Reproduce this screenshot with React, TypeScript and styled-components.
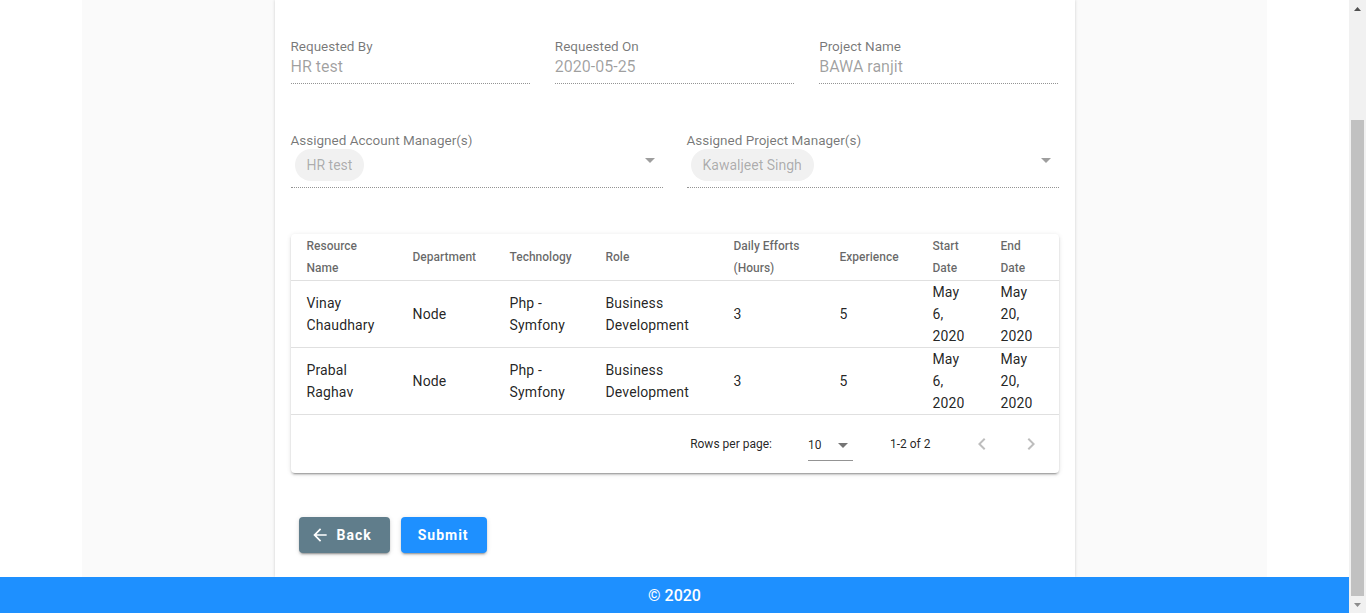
import React from 'react'
import styled, { createGlobalStyle } from 'styled-components'

const GlobalStyle = createGlobalStyle`
  html, body {
    margin: 0;
    padding: 0;
    background: #fff;
    overflow: hidden;
    font-family: Roboto, 'Liberation Sans', Arial, sans-serif;
  }
  * { box-sizing: border-box; }
`

const Viewport = styled.div`
  height: 100vh;
  display: flex;
`

const Page = styled.div`
  flex: 1;
  min-width: 0;
  display: flex;
  flex-direction: column;
`

const Shell = styled.main`
  flex: 1;
  width: 1185px;
  margin: 0 auto;
  background: #fafafa;
  display: flex;
  justify-content: center;
`

const Card = styled.section`
  width: 800px;
  background: #fff;
  box-shadow: 0 0 3px rgba(0, 0, 0, 0.18);
  padding: 40px 16px 24px;
  display: flex;
  flex-direction: column;
  justify-content: flex-end;
`

const FieldGrid = styled.div<{ $cols: number; $gap: number }>`
  display: grid;
  grid-template-columns: repeat(${(p) => p.$cols}, 1fr);
  column-gap: ${(p) => p.$gap}px;
  margin-bottom: ${(p) => (p.$cols === 3 ? 50 : 46)}px;
`

const Field = styled.div`
  display: flex;
  flex-direction: column;
`

const Label = styled.label`
  font-size: 13.5px;
  line-height: 12px;
  height: 12px;
  color: rgba(0, 0, 0, 0.54);
  white-space: nowrap;
`

const InputLine = styled.div`
  border-bottom: 1px dotted rgba(0, 0, 0, 0.42);
  padding: 5px 0 7px;
  font-size: 16px;
  line-height: 19px;
  color: rgba(0, 0, 0, 0.38);
`

const SelectLine = styled.div`
  border-bottom: 1px dotted rgba(0, 0, 0, 0.42);
  padding: 3px 1px 6px 4px;
  display: flex;
  align-items: flex-start;
  justify-content: space-between;
`

const Chip = styled.span`
  height: 32px;
  border-radius: 16px;
  background: #f1f1f1;
  color: rgba(0, 0, 0, 0.3);
  font-size: 14px;
  display: inline-flex;
  align-items: center;
  padding: 0 12px;
`

const DropIcon = styled.svg`
  width: 24px;
  height: 24px;
  fill: rgba(0, 0, 0, 0.38);
  margin-top: -1px;
`

const Paper = styled.div`
  border-radius: 4px;
  background: #fff;
  box-shadow: 0px 3px 1px -2px rgba(0, 0, 0, 0.2), 0px 2px 2px 0px rgba(0, 0, 0, 0.14),
    0px 1px 5px 0px rgba(0, 0, 0, 0.12);
  margin-bottom: 44px;
`

const Table = styled.table`
  width: 100%;
  table-layout: fixed;
  border-collapse: collapse;
`

const Col = styled.col<{ $w: number }>`
  width: ${(p) => p.$w}px;
`

const HeadCell = styled.th`
  text-align: left;
  vertical-align: middle;
  font-size: 12px;
  font-weight: 500;
  line-height: 22px;
  color: rgba(0, 0, 0, 0.6);
  padding: 1px 16px;
  border-bottom: 1px solid #e0e0e0;
`

const Cell = styled.td`
  font-size: 14px;
  line-height: 22px;
  color: rgba(0, 0, 0, 0.87);
  letter-spacing: 0.01em;
  padding: 0 16px;
  vertical-align: middle;
  border-bottom: 1px solid #e0e0e0;
`

const Pager = styled.div`
  height: 58px;
  display: flex;
  align-items: center;
  justify-content: flex-end;
  padding-right: 3px;
  font-size: 12px;
  color: rgba(0, 0, 0, 0.87);
`

const PagerSelect = styled.div`
  margin: 0 37px 0 36px;
  width: 45px;
  height: 34px;
  display: flex;
  align-items: center;
  justify-content: space-between;
  border-bottom: 1px solid rgba(0, 0, 0, 0.42);
  padding-top: 2px;
  svg {
    width: 24px;
    height: 24px;
    fill: rgba(0, 0, 0, 0.54);
    margin-right: -2px;
  }
`

const PagerActions = styled.div`
  display: flex;
  margin-left: 27px;
`

const IconBtn = styled.button`
  width: 49px;
  height: 48px;
  border: 0;
  background: transparent;
  display: flex;
  align-items: center;
  justify-content: center;
  padding: 0;
  svg {
    width: 24px;
    height: 24px;
    fill: rgba(0, 0, 0, 0.26);
  }
`

const Actions = styled.div`
  display: flex;
  gap: 11px;
  padding-left: 8px;
`

const Button = styled.button<{ $tone: 'grey' | 'blue' }>`
  height: 36px;
  border: 0;
  border-radius: 4px;
  padding: ${(p) => (p.$tone === 'grey' ? '0 18px 0 11px' : '0 18px 0 17px')};
  display: inline-flex;
  align-items: center;
  gap: 7px;
  background: ${(p) => (p.$tone === 'grey' ? '#607d8b' : '#1e90ff')};
  color: #fff;
  font-family: Roboto, 'Liberation Sans', Arial, sans-serif;
  font-size: 14px;
  font-weight: 700;
  letter-spacing: 1px;
  box-shadow: 0px 3px 1px -2px rgba(0, 0, 0, 0.2), 0px 2px 2px 0px rgba(0, 0, 0, 0.14),
    0px 1px 5px 0px rgba(0, 0, 0, 0.12);
  svg {
    width: 20px;
    height: 20px;
    fill: #fff;
  }
`

const Footer = styled.footer`
  height: 36px;
  flex-shrink: 0;
  background: #1e90ff;
  color: #fff;
  font-size: 16px;
  font-weight: 500;
  display: flex;
  align-items: center;
  justify-content: center;
`

/* the window's own scrollbar, scrolled to the bottom */
const ScrollBar = styled.aside`
  width: 17px;
  flex-shrink: 0;
  background: #f1f1f1;
  display: flex;
  flex-direction: column;
`

const ScrollArrow = styled.div<{ $up?: boolean }>`
  height: 17px;
  display: flex;
  align-items: center;
  justify-content: center;
  svg {
    width: 7px;
    height: 4px;
    fill: ${(p) => (p.$up ? '#505050' : '#8c8c8c')};
  }
`

const ScrollTrack = styled.div`
  flex: 1;
  display: flex;
  flex-direction: column;
  justify-content: flex-end;
  padding: 0 2px;
`

const ScrollThumb = styled.div`
  height: 82.2%;
  background: #c1c1c1;
`

const rows = [
  { name: 'Vinay Chaudhary', start: 'May 6, 2020' },
  { name: 'Prabal Raghav', start: 'May 6, 2020' },
]

const widths = [106, 97, 96, 128, 106, 93, 68, 74]

const ArrowDrop = () => (
  <svg viewBox="0 0 24 24">
    <path d="M7 10l5 5 5-5z" />
  </svg>
)

export default function App() {
  return (
    <>
      <GlobalStyle />
      <Viewport>
        <Page>
          <Shell>
            <Card>
              <FieldGrid $cols={3} $gap={25}>
                <Field>
                  <Label>Requested By</Label>
                  <InputLine>HR test</InputLine>
                </Field>
                <Field>
                  <Label>Requested On</Label>
                  <InputLine>2020-05-25</InputLine>
                </Field>
                <Field>
                  <Label>Project Name</Label>
                  <InputLine>BAWA ranjit</InputLine>
                </Field>
              </FieldGrid>
              <FieldGrid $cols={2} $gap={24}>
                <Field>
                  <Label>Assigned Account Manager(s)</Label>
                  <SelectLine>
                    <Chip>HR test</Chip>
                    <DropIcon viewBox="0 0 24 24">
                      <path d="M7 10l5 5 5-5z" />
                    </DropIcon>
                  </SelectLine>
                </Field>
                <Field>
                  <Label>Assigned Project Manager(s)</Label>
                  <SelectLine>
                    <Chip>Kawaljeet Singh</Chip>
                    <DropIcon viewBox="0 0 24 24">
                      <path d="M7 10l5 5 5-5z" />
                    </DropIcon>
                  </SelectLine>
                </Field>
              </FieldGrid>

              <Paper>
                <Table>
                  <colgroup>
                    {widths.map((w, i) => (
                      <Col key={i} $w={w} />
                    ))}
                  </colgroup>
                  <thead>
                    <tr>
                      <HeadCell>Resource Name</HeadCell>
                      <HeadCell>Department</HeadCell>
                      <HeadCell>Technology</HeadCell>
                      <HeadCell>Role</HeadCell>
                      <HeadCell>Daily Efforts (Hours)</HeadCell>
                      <HeadCell>Experience</HeadCell>
                      <HeadCell>Start Date</HeadCell>
                      <HeadCell>End Date</HeadCell>
                    </tr>
                  </thead>
                  <tbody>
                    {rows.map((r) => (
                      <tr key={r.name}>
                        <Cell>{r.name}</Cell>
                        <Cell>Node</Cell>
                        <Cell>Php - Symfony</Cell>
                        <Cell>Business Development</Cell>
                        <Cell>3</Cell>
                        <Cell>5</Cell>
                        <Cell>{r.start}</Cell>
                        <Cell>May 20, 2020</Cell>
                      </tr>
                    ))}
                  </tbody>
                </Table>
                <Pager>
                  <span>Rows per page:</span>
                  <PagerSelect>
                    <span>10</span>
                    <ArrowDrop />
                  </PagerSelect>
                  <span>1-2 of 2</span>
                  <PagerActions>
                    <IconBtn aria-label="previous page">
                      <svg viewBox="0 0 24 24">
                        <path d="M15.41 16.59L10.83 12l4.58-4.59L14 6l-6 6 6 6 1.41-1.41z" />
                      </svg>
                    </IconBtn>
                    <IconBtn aria-label="next page">
                      <svg viewBox="0 0 24 24">
                        <path d="M8.59 16.59L13.17 12 8.59 7.41 10 6l6 6-6 6-1.41-1.41z" />
                      </svg>
                    </IconBtn>
                  </PagerActions>
                </Pager>
              </Paper>

              <Actions>
                <Button $tone="grey">
                  <svg viewBox="0 0 24 24">
                    <path d="M20 11H7.83l5.59-5.59L12 4l-8 8 8 8 1.41-1.41L7.83 13H20v-2z" />
                  </svg>
                  Back
                </Button>
                <Button $tone="blue">Submit</Button>
              </Actions>
            </Card>
          </Shell>
          <Footer>© 2020</Footer>
        </Page>
        <ScrollBar>
          <ScrollArrow $up>
            <svg viewBox="0 0 7 4">
              <path d="M3.5 0L7 4H0z" />
            </svg>
          </ScrollArrow>
          <ScrollTrack>
            <ScrollThumb />
          </ScrollTrack>
          <ScrollArrow>
            <svg viewBox="0 0 7 4">
              <path d="M0 0h7L3.5 4z" />
            </svg>
          </ScrollArrow>
        </ScrollBar>
      </Viewport>
    </>
  )
}
